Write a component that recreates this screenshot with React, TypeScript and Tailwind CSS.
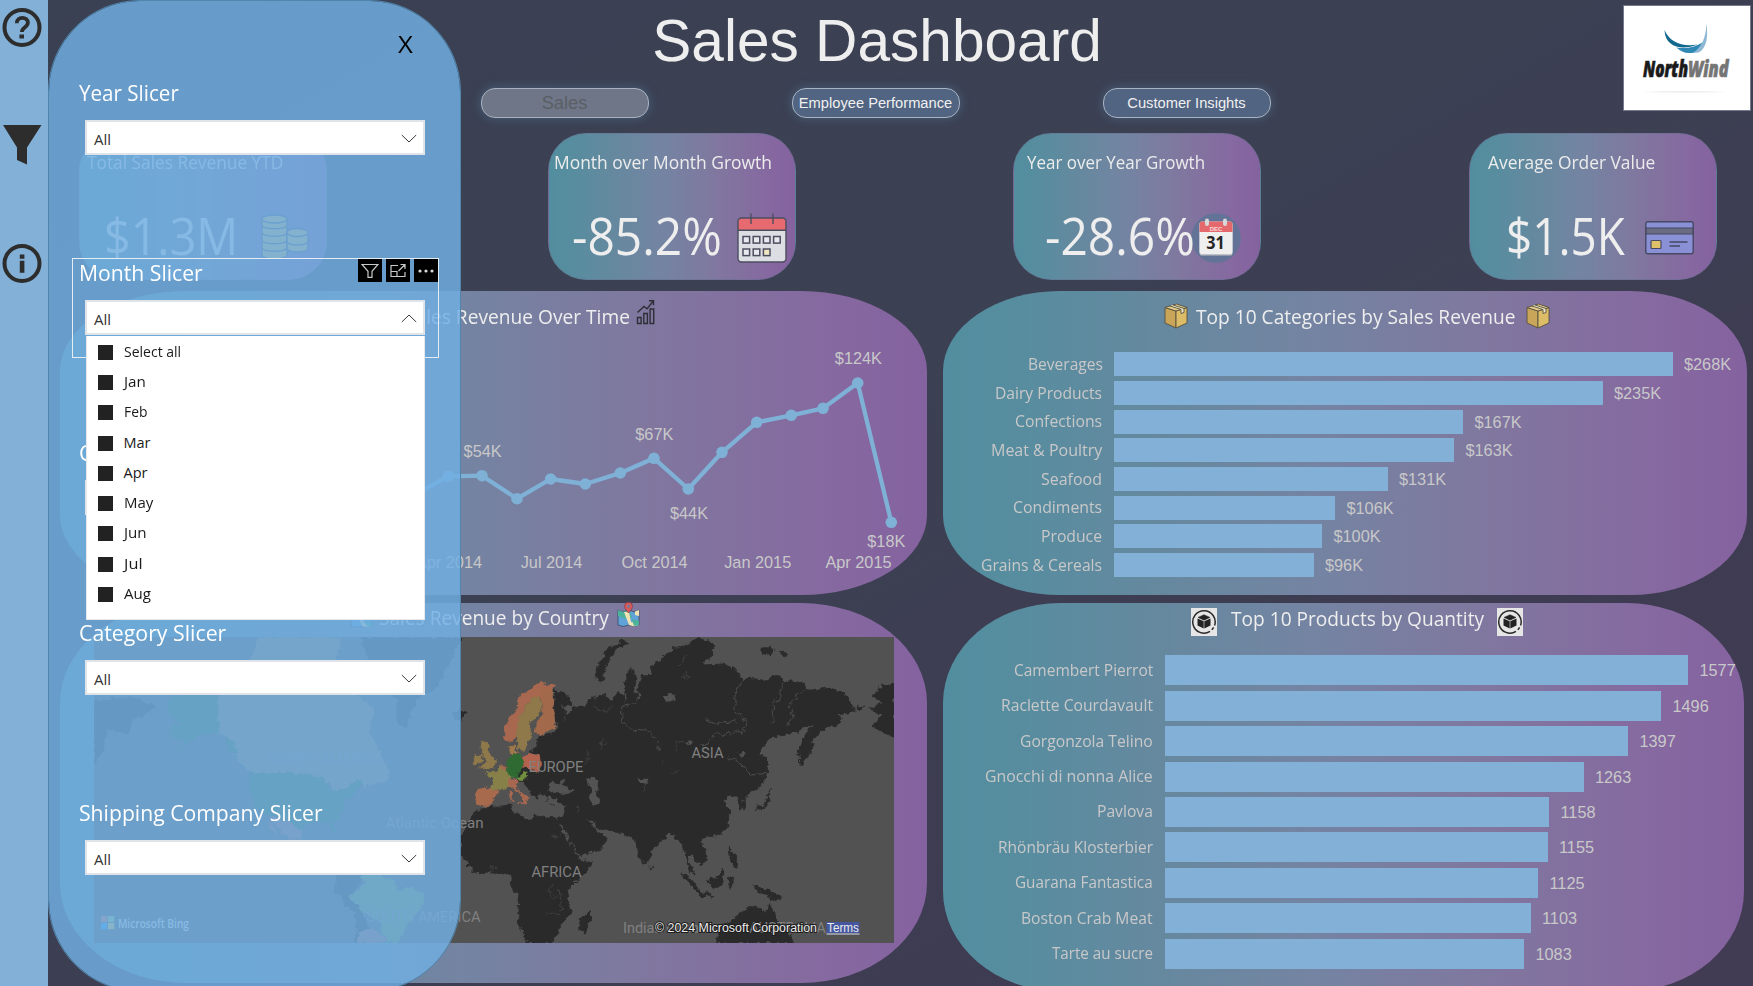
import React, { useLayoutEffect, useRef, useState } from "react";

const GRADIENT =
  "bg-[linear-gradient(90deg,#528e9f_0%,#568d9f_8%,#64899f_25%,#7484a2_46%,#80779f_68%,#8668a0_90%,#84629f_100%)]";

/** Single line of text condensed or stretched to a given width. */
function Fit({ w, className = "", children }: { w: number; className?: string; children: string }) {
  const inner = useRef<HTMLSpanElement>(null);
  const [scale, setScale] = useState(1);
  useLayoutEffect(() => {
    if (inner.current) setScale(w / inner.current.offsetWidth);
  }, [w]);
  return (
    <span className={`block shrink-0 whitespace-nowrap ${className}`} style={{ width: w }}>
      <span ref={inner} className="inline-block origin-left" style={{ transform: `scaleX(${scale})` }}>
        {children}
      </span>
    </span>
  );
}

/* ---------- icons ---------- */

const CoinsIcon = () => (
  <svg width="48" height="48" viewBox="0 0 48 48" fill="#e0c36a" stroke="#4b5a78" strokeWidth="1.3">
    {[38, 30.5, 23, 15.5, 8].map((y) => (
      <path key={y} d={`M1 ${y - 3}v6c0 5 25 5 25 0v-6`} />
    ))}
    <ellipse cx="13.500" cy="5" rx="12.500" ry="4" />
    {[33, 26].map((y) => (
      <path key={y} d={`M26 ${y - 5}v7c3 4 21 4 21 -1v-6`} />
    ))}
    <ellipse cx="36.500" cy="18.500" rx="10.500" ry="4" />
  </svg>
);

const CalendarIcon = () => (
  <svg width="50" height="50" viewBox="0 0 50 50" fill="none">
    <rect x="1" y="5" width="48" height="44" rx="3.500" fill="#dcdee4" />
    <path d="M1 17V8.500a3.500 3.500 0 0 1 3.500-3.500h41a3.500 3.500 0 0 1 3.500 3.500V17z" fill="#e76a70" />
    <rect x="1" y="5" width="48" height="44" rx="3.500" stroke="#4c4e60" strokeWidth="1.400" />
    <path d="M1 17.300h48M14 0.500v10.500M36 0.500v10.500" stroke="#4c4e60" strokeWidth="1.400" />
    <g stroke="#4c4e60" strokeWidth="1.500" fill="#e8e9ee">
      {[6, 16.2, 26.4, 36.6].map((x) => (
        <rect key={x} x={x} y="23.500" width="6.600" height="6.600" />
      ))}
      {[6, 16.2].map((x) => (
        <rect key={x} x={x} y="36" width="6.600" height="6.600" />
      ))}
      <rect x="26.400" y="36" width="6.600" height="6.600" fill="#f0e6bf" />
    </g>
  </svg>
);

const Dec31Icon = () => (
  <svg width="50" height="50" viewBox="0 0 50 50">
    <circle cx="25" cy="25" r="24.800" fill="#637397" />
    <rect x="8.500" y="9" width="33" height="33.500" rx="2.500" fill="#bfc0c4" />
    <rect x="8.500" y="8.500" width="33" height="32.500" rx="2.500" fill="#efefef" />
    <path d="M8.500 19V11a2.500 2.500 0 0 1 2.500-2.500h28a2.500 2.500 0 0 1 2.500 2.500v8z" fill="#e4686c" />
    <rect x="14" y="5.500" width="4" height="7.500" rx="2" fill="#d7d8dc" />
    <rect x="32" y="5.500" width="4" height="7.500" rx="2" fill="#d7d8dc" />
    <text x="25" y="17.500" textAnchor="middle" fontSize="6" fontWeight="700" fill="#f6dcdc" fontFamily="Liberation Sans, sans-serif">
      DEC
    </text>
    <text x="24.500" y="36" textAnchor="middle" fontSize="18" fontWeight="700" fill="#252525" fontFamily="Open Sans, sans-serif" textLength="18.500" lengthAdjust="spacingAndGlyphs">
      31
    </text>
  </svg>
);

const CreditCardIcon = () => (
  <svg width="49" height="34" viewBox="0 0 49 34">
    <rect x="0.800" y="0.800" width="47.400" height="32" rx="2" fill="#8a90d6" stroke="#464864" strokeWidth="1.400" />
    <path d="M1 7h47v6H1z" fill="#6a6c84" stroke="#464864" strokeWidth="1.200" />
    <rect x="6" y="19.500" width="10" height="8" rx="1" fill="#e0c068" stroke="#464864" strokeWidth="1.200" />
    <path d="M24.500 21h18M24.500 25h10.500" stroke="#464864" strokeWidth="1.300" />
  </svg>
);

const TrendIcon = () => (
  <svg width="19" height="26" viewBox="0 0 19 26" fill="none" stroke="#2e2f36" strokeWidth="1.400">
    <path d="M1.500 18.500h3.600v6H1.500zM7.800 14.500h3.600v10H7.800zM14.100 10h3.600v14.500h-3.600z" />
    <path d="M1.500 13.500 8 7.500l3 2.200 6-7.200M13 1.800h4.500v4.500" />
  </svg>
);

const BoxIcon = () => (
  <svg width="24" height="26" viewBox="0 0 24 26" stroke="#55503f" strokeWidth="0.900" strokeLinejoin="round">
    <path d="M1 4.500 12 8v17L1 20z" fill="#c9a55a" />
    <path d="M23 4.500 12 8v17l11-5z" fill="#dcbc66" />
    <path d="M1 4.500 12.500 1 23 4.500 12 8z" fill="#e4cd8a" />
    <path d="M6 3 17 6.500v4l3-1V5.500L9 2" fill="#efe6c8" />
  </svg>
);

const ProductIcon = () => (
  <svg width="26" height="28" viewBox="0 0 26 28" className="shrink-0">
    <path d="M0 0h26v28H0z" fill="#e6e6e6" />
    <path d="M19 23.400A11.200 11.200 0 1 1 23.600 17.500M22.600 19.300l-1.700 2.500" fill="none" stroke="#2a2a2a" strokeWidth="1.500" />
    <path d="m13 6.700 6 2.700L13 12.200 7 9.400z" fill="#222" stroke="#222" strokeWidth="0.500" />
    <path d="M6.500 10.400 12.700 13.200v7.200l-6.200-2.900zM19.500 10.400 13.300 13.200v7.200l6.200-2.900z" fill="#222" />
  </svg>
);

const MapPinIcon = () => (
  <svg width="23" height="26" viewBox="0 0 23 26" strokeLinejoin="round">
    <path d="m1 8 5 2 6-2 5 2 5-2v15l-5 1.500-5-1.500-6 1.500L1 23z" fill="#5fa3d8" stroke="#3b4d63" strokeWidth="0.800" />
    <path d="m1 8 5 2 6-2 3 8-6 1-8-3z" fill="#4bb39a" />
    <path d="M7 10h5l2 10 8 2v1l-5 1.500L12 23z" fill="#efe3b5" />
    <path d="m15 17 7 2v4l-5 1z" fill="#4bb39a" />
    <path d="M18 9.500 22 8v6l-4-1z" fill="#efe3b5" />
    <path d="M11.500 11S7.500 7 7.500 4.300a4 4 0 0 1 8 0C15.500 7 11.500 11 11.500 11z" fill="#d8595b" stroke="#7a3a44" strokeWidth="0.700" />
    <circle cx="11.500" cy="4.300" r="1.500" fill="#6e7f9c" />
  </svg>
);

const Chevron = ({ up }: { up?: boolean }) => (
  <svg width="16" height="9" viewBox="0 0 16 9" fill="none" stroke="#3c3c3c" strokeWidth="1" className="mt-px">
    {up ? <path d="m0.800 8 7.200-7 7.200 7" /> : <path d="m0.800 1 7.200 7 7.200-7" />}
  </svg>
);

/* ---------- sidebar ---------- */

function Sidebar() {
  return (
    <aside className="flex h-full w-[48px] shrink-0 flex-col bg-[#82b0d6] pl-[2px] pt-[7px]">
      <svg width="40" height="40" viewBox="0 0 40 40" fill="none" stroke="#2d2d2d">
        <circle cx="20" cy="20.500" r="17.500" strokeWidth="4" />
        <path d="M14.700 16.200c0-7 11.200-7 11.200-.4 0 4.500-6 4.400-6 9.200" strokeWidth="3.800" />
        <path d="M17.400 27.500h4.600v4h-4.600z" fill="#2d2d2d" stroke="none" />
      </svg>
      <svg width="40" height="40" viewBox="0 0 40 40" className="mt-[78px]">
        <path d="M1 0h38.500L25 22.500V39.500L15 35V22.500z" fill="#2d2d2d" />
      </svg>
      <svg width="40" height="40" viewBox="0 0 40 40" className="mt-[78px]" fill="none">
        <circle cx="20" cy="20.500" r="17.500" stroke="#2d2d2d" strokeWidth="4" />
        <path d="M17.800 11.500h4.600v4.200h-4.600zM17.800 17.800h4.600v12h-4.600z" fill="#2d2d2d" />
      </svg>
    </aside>
  );
}

/* ---------- header ---------- */

function NorthWindLogo() {
  return (
    <svg width="128" height="106" viewBox="0 0 128 106">
      <path d="M0.500 0.500h127v105H0.500z" fill="#fff" stroke="#777a8c" />
      <path d="M41.500 25c5 12 17 17 33 14.500C60 45.500 42 43 41.500 25z" fill="#12678f" />
      <path d="M53.500 42.500c8 1.500 18 .5 26.500-5.500-4 8-7 10-9.500 10.800-8 1-13-1-17-5.300z" fill="#2f87b3" />
      <path d="M83.500 18c1.500 14 .5 24-7 29-2 .8-4 .8-6.500.8 8-5 13-14 13.500-29.800z" fill="#8fb8d6" />
      <text y="71.500" fontSize="22" fontWeight="800" fontStyle="italic" fontFamily="Open Sans, Roboto, sans-serif" strokeWidth="0.700">
        <tspan x="20" textLength="45" lengthAdjust="spacingAndGlyphs" fill="#1a1a1a" stroke="#1a1a1a">North</tspan>
        <tspan x="65" textLength="40.500" lengthAdjust="spacingAndGlyphs" fill="#757575" stroke="#757575">Wind</tspan>
      </text>
      <path d="M18 87q44-2 88 0-44 1.600-88 0z" fill="#eeeeee" />
    </svg>
  );
}

function Header() {
  const pill =
    "flex h-[30px] w-[168px] items-center justify-center rounded-[14px] border border-[#a9b2c0] shadow-[0_0_10px_1px_rgba(90,140,180,0.35)]";
  return (
    <header className="flex h-[133px] font-['Liberation_Sans',Arial,sans-serif]">
      <div className="w-[1575px]">
        <h1 className="mt-[8px] pl-[83px] text-center text-[58.600px] leading-[66px] text-[#eeeeee]">Sales Dashboard</h1>
        <nav className="mt-[14px] flex gap-[143px] pl-[432.500px]">
          <button className={`${pill} bg-[#6e7687] text-[18.300px] text-[#5a5f66]`}>Sales</button>
          <button className={`${pill} bg-[#516482] text-[14.700px] text-[#f0f0f0]`}>
            <span className="whitespace-nowrap">Employee Performance</span>
          </button>
          <button className={`${pill} bg-[#516482] text-[14.700px] text-[#f0f0f0]`}>Customer Insights</button>
        </nav>
      </div>
      <div className="mt-[5px]">
        <NorthWindLogo />
      </div>
    </header>
  );
}

/* ---------- KPI cards ---------- */

interface KpiProps {
  title: string;
  titleW: number;
  titlePad: string;
  value: string;
  valueW: number;
  valuePad: string;
  iconGap: string;
  icon: React.ReactNode;
}

function Kpi({ title, titleW, titlePad, value, valueW, valuePad, iconGap, icon }: KpiProps) {
  return (
    <section className={`h-[147px] w-[248px] rounded-[38px] border border-[#66708f]/50 pt-[14px] ${GRADIENT}`}>
      <div className={titlePad}>
        <Fit w={titleW} className="text-[18px] leading-[28px] text-[#ececec]">{title}</Fit>
      </div>
      <div className={`mt-[29px] flex h-[62px] items-center ${valuePad}`}>
        <Fit w={valueW} className="text-[50.500px] leading-[60px] text-[#eeeeee]">{value}</Fit>
        <span className={`shrink-0 pt-[3px] ${iconGap}`}>{icon}</span>
      </div>
    </section>
  );
}

/* ---------- revenue over time ---------- */

const points: [number, number][] = [
  [139, 540], [171, 520], [205, 530], [238, 500], [273, 512], [306, 498], [341, 520], [376, 505], [410, 497],
  [448.3, 476.3], [482, 475.7], [517, 498.7], [550.7, 479], [585.3, 484], [620.3, 473], [654, 458.3], [688.3, 489],
  [722, 452.3], [756.7, 422.3], [791.3, 415.3], [823, 408.3], [857.7, 383], [891.3, 522.3],
];
const pointLabels: [number, number, string][] = [
  [858.4, 364, "$124K"], [654.3, 440, "$67K"], [482.600, 457, "$54K"], [689, 519, "$44K"], [886.3, 547, "$18K"],
];
const monthLabels: [number, string][] = [
  [449, "Apr 2014"], [551.5, "Jul 2014"], [654.6, "Oct 2014"], [757.700, "Jan 2015"], [858.5, "Apr 2015"],
];

function RevenueOverTime() {
  return (
    <section className={`h-[304px] w-[867px] rounded-[126px/80px] ${GRADIENT}`}>
      <div className="flex h-[50px] items-center pl-[345px]">
        <Fit w={225} className="mt-[2px] text-[19.500px] leading-[30px] text-[#eeeeee]">Sales Revenue Over Time</Fit>
        <span className="-mt-[8px] ml-[5.500px]"><TrendIcon /></span>
      </div>
      <svg width="867" height="250" viewBox="60 341 867 250" fontFamily="Liberation Sans, Arial, sans-serif" fontSize="16.300" fill="#c8c8c9" textAnchor="middle">
        <polyline points={points.map((p) => p.join(",")).join(" ")} fill="none" stroke="#7fb0d6" strokeWidth="4.300" strokeLinejoin="round" />
        {points.map(([x, y]) => (
          <circle key={x} cx={x} cy={y} r="5.800" fill="#7fb0d6" />
        ))}
        {pointLabels.map(([x, y, t]) => (
          <text key={t} x={x} y={y}>{t}</text>
        ))}
        {monthLabels.map(([x, t]) => (
          <text key={t} x={x} y="567.700">{t}</text>
        ))}
      </svg>
    </section>
  );
}

/* ---------- bar charts ---------- */

type Bar = [name: string, nameW: number, barW: number, value: string];

const categories: Bar[] = [
  ["Beverages", 74.500, 559, "$268K"],
  ["Dairy Products", 107, 489, "$235K"],
  ["Confections", 87, 349.500, "$167K"],
  ["Meat & Poultry", 111.500, 340.500, "$163K"],
  ["Seafood", 61, 274, "$131K"],
  ["Condiments", 89, 221.500, "$106K"],
  ["Produce", 61, 208.500, "$100K"],
  ["Grains & Cereals", 121.500, 200, "$96K"],
];

const products: Bar[] = [
  ["Camembert Pierrot", 139, 523.500, "1577"],
  ["Raclette Courdavault", 152, 496.500, "1496"],
  ["Gorgonzola Telino", 133, 463.500, "1397"],
  ["Gnocchi di nonna Alice", 168, 419, "1263"],
  ["Pavlova", 56, 384.500, "1158"],
  ["Rhönbräu Klosterbier", 155, 383, "1155"],
  ["Guarana Fantastica", 138, 373.500, "1125"],
  ["Boston Crab Meat", 132, 366, "1103"],
  ["Tarte au sucre", 101, 359.500, "1083"],
];

function BarRows({ rows, row, label, bar }: { rows: Bar[]; row: string; label: string; bar: string }) {
  return (
    <div>
      {rows.map(([name, nameW, barW, value]) => (
        <div key={name} className={`flex items-center ${row}`}>
          <div className={`flex shrink-0 justify-end ${label}`}>
            <Fit w={nameW} className="-mt-px text-[16.500px] leading-[24px] text-[#c8c8c9]">{name}</Fit>
          </div>
          <div className={`ml-[11.500px] shrink-0 bg-[#82b0d6] ${bar}`} style={{ width: barW }} />
          <span className="ml-[11.500px] font-['Liberation_Sans',Arial,sans-serif] text-[16.300px] leading-[24px] text-[#c8c8c9]">{value}</span>
        </div>
      ))}
    </div>
  );
}

function TopCategories() {
  return (
    <section className={`h-[304px] w-[804px] rounded-[117px/80px] ${GRADIENT}`}>
      <div className="flex h-[50px] items-center pl-[221px]">
        <span className="-mt-px"><BoxIcon /></span>
        <Fit w={319} className="ml-[8px] mt-[2px] text-[19.500px] leading-[30px] text-[#eeeeee]">Top 10 Categories by Sales Revenue</Fit>
        <span className="-mt-px ml-[11px]"><BoxIcon /></span>
      </div>
      <div className="pt-[9px]">
        <BarRows rows={categories} row="h-[28.700px]" label="w-[159px]" bar="h-[24px]" />
      </div>
    </section>
  );
}

function TopProducts() {
  return (
    <section className={`h-[388px] w-[801px] rounded-[117px/100px] ${GRADIENT}`}>
      <div className="flex h-[37px] items-center pl-[248px]">
        <ProductIcon />
        <Fit w={253} className="-mt-[6px] ml-[14px] text-[19.500px] leading-[30px] text-[#eeeeee]">Top 10 Products by Quantity</Fit>
        <span className="ml-[13px]"><ProductIcon /></span>
      </div>
      <div className="pt-[12.500px]">
        <BarRows rows={products} row="h-[35.450px]" label="w-[210px]" bar="h-[30px]" />
      </div>
    </section>
  );
}

/* ---------- map ---------- */

const OLD_WORLD_LAND = [
  "M345 300 370 310 398 335 390 352 362 342 380 375 400 355 430 348 455 325 475 318 498 310 496 328 515 330 535 303 552 322 562 345 556 300 558 255 575 235 586 262 580 300 592 318 588 345 600 320 595 290 604 258 634 250 640 226 668 206 690 180 742 165 768 145 800 152 822 165 820 195 795 215 788 225 850 222 888 240 905 275 932 265 980 272 1010 255 1038 275 1095 280 1100 300 1165 295 1215 310 1240 345 1245 365 1190 375 1210 395 1180 410 1145 420 1120 450 1110 490 1080 525 1075 480 1095 440 1122 402 1060 430 1000 440 985 450 955 490 985 505 985 550 960 590 930 610 912 628 915 655 900 655 896 622 875 615 850 630 870 660 868 700 840 735 800 740 780 752 800 790 795 815 775 820 752 792 742 812 765 855 748 845 735 790 720 750 690 728 670 745 640 772 632 800 615 828 595 790 585 745 560 738 520 722 475 717 450 685 440 690 465 715 470 728 505 745 482 775 420 800 400 770 370 710 348 690 370 680 376 652 345 648 318 632 322 618 300 612 290 628 268 600 240 572 235 545 250 528 302 545 298 492 275 490 290 465 300 440 345 430 350 400 340 340Z",
  "M64 745 80 700 108 662 150 650 215 645 222 668 275 692 285 678 350 688 375 740 400 780 420 810 457 812 442 842 388 892 385 930 395 970 365 1000 345 1042 335 1058 262 1058 235 990 240 930 215 890 217 855 170 845 108 848 75 812 64 795Z",
  "M450 960 455 980 435 1025 418 1020 425 985Z",
  "M550 150 562 158 520 185 500 220 484 276 468 268 474 230 500 178Z",
  "M1362 280 1330 285 1298 318 1330 340 1292 355 1310 370 1330 375 1298 408 1330 430 1362 445Z",
  "M722 848 745 858 785 905 822 918 785 920 760 895Z",
  "M803 875 830 860 850 838 852 880 825 897Z",
  "M938 885 985 900 1025 925 1000 928 960 908Z",
  "M830 1058 835 1012 870 995 905 965 935 950 960 952 975 972 990 940 1008 988 1040 1020 1060 1058Z",
  "M1000 590 985 605 990 635 960 658 945 655 980 635 984 605Z",
  "M868 765 878 790 895 830 885 835 870 800Z",
  "M38 370 60 360 76 368 62 390 45 388Z",
  "M965 175 990 172 1005 185 985 195 968 190ZM1018 185 1040 190 1030 198Z",
  "M1250 345 1268 348 1262 365 1248 360Z",
  "M870 860 878 862 874 895 866 880Z",
  "M630 825 638 832 632 840Z",
];

const EUROPE: [string, string][] = [
  ["#a86850", "M193 410 235 350 242 320 275 295 300 280 345 285 335 305 300 318 275 318 248 360 235 400 232 440 205 458 193 440Z"],
  ["#8f784a", "M235 400 248 362 275 320 297 318 306 358 290 380 270 400 272 440 250 482 232 472Z"],
  ["#a26a4c", "M297 305 335 300 345 405 310 435 287 430 288 398 312 370Z"],
  ["#8f784a", "M122 455 145 458 150 488 170 515 165 530 118 538 136 515 130 490 120 472ZM103 500 125 488 126 515 103 525Z"],
  ["#a07848", "M208 470 222 468 235 490 212 494Z"],
  ["#2f6b30", "M204 502 222 494 247 500 250 530 234 542 240 560 208 562 197 535Z"],
  ["#b2634d", "M247 502 270 494 298 497 302 530 290 545 252 528Z"],
  ["#a86850", "M178 530 198 530 196 545Z"],
  ["#878048", "M135 550 155 550 180 532 210 556 205 590 185 602 155 597 158 568Z"],
  ["#a86a4e", "M107 597 150 595 178 605 158 628 150 645 128 650 108 642Z"],
  ["#a86850", "M202 568 240 572 228 585 240 605 268 622 258 642 235 640 255 630 222 595 203 588ZM210 605 218 605 216 630 209 625Z"],
  ["#729040", "M234 562 256 548 261 562 245 572Z"],
];

const AMERICAS: [string, string][] = [
  ["#2c2c2c", "M282 300 400 290 470 320 440 345 400 360 380 400 320 390 312 450 282 492Z"],
  ["#2c2c2c", "M1080 112H1385L1350 190 1310 262 1250 300 1228 350 1215 385 1190 370 1190 300 1140 240 1100 170Z"],
  ["#8a7858", "M655 285 655 400 680 410 718 462 700 465 755 520 920 520 990 550 1000 575 1040 560 1080 540 1095 562 1165 540 1170 520 1150 480 1110 400 1120 325 1080 290 1010 180 1022 112 780 112 750 182 740 270Z"],
  ["#2a6432", "M655 280 655 402 600 400 570 425 500 465 558 425 515 412 505 388 540 370 500 332 515 285ZM675 410 695 420 718 462 700 458 680 432Z"],
  ["#2a6432", "M750 520 920 518 970 535 997 575 1040 565 1078 535 1085 560 1040 600 1025 640 1000 665 1012 715 985 670 930 668 905 692 870 665 800 650 762 610 748 560Z"],
  ["#9a6058", "M800 650 870 665 905 692 908 718H870L840 690ZM800 650 840 712 815 690Z"],
  ["#2c2c2c", "M1010 822 1100 822 1050 890 1090 940 1110 985 1072 1028H1064L1070 950 1030 908 1005 870Z"],
  ["#688c44", "M1048 890 1095 850 1085 822 1130 822 1188 842 1190 870 1240 865 1277 885 1268 915 1235 960 1192 1028H1155L1165 1015 1142 995 1145 965 1080 930Z"],
  ["#9a6058", "M1080 1000 1105 980 1140 1000 1160 1015 1150 1028H1070Z"],
];

function WorldMap() {
  const label = { fill: "#808080", lengthAdjust: "spacingAndGlyphs" };
  return (
    <svg width="800" height="306" viewBox="0 0 800 306" fontFamily="Roboto, sans-serif" fontSize="15">
      <defs>
        <filter id="coast" x="0" y="0" width="800" height="306" filterUnits="userSpaceOnUse" primitiveUnits="userSpaceOnUse">
          <feTurbulence type="fractalNoise" baseFrequency="0.180" numOctaves="3" seed="4" />
          <feDisplacementMap in="SourceGraphic" scale="7.500" xChannelSelector="R" yChannelSelector="G" />
        </filter>
      </defs>
      <path d="M0 0h800v306H0z" fill="#525252" />
      <g filter="url(#coast)">
        <g transform="translate(-94 -37) scale(.33333)">
          {AMERICAS.map(([fill, d]) => (
            <path key={d} d={d} fill={fill} />
          ))}
        </g>
        <g transform="translate(346 -47) scale(.33333)">
          {OLD_WORLD_LAND.map((d) => (
            <path key={d} d={d} fill="#2c2c2c" stroke="#2c2c2c" strokeWidth="3" strokeLinejoin="round" />
          ))}
          <g fill="#525252">
            <path d="M325 600 335 575 355 580 372 565 368 582 402 605 370 612 340 608Z" />
            <path d="M440 570 465 562 475 580 468 600 480 640 460 648 448 620 452 600Z" />
            <path d="M318 632 325 615 360 640 376 650 360 655Z" />
            <path d="M665 318 690 312 705 325 690 335 672 330ZM592 568 625 566 618 585 600 578ZM735 452 762 455 750 466ZM895 486 920 490 905 500Z" />
          </g>
          <g fill="none" stroke="#4c4c4c" strokeWidth="3" strokeLinejoin="round">
            <path d="M588 340 545 350 545 395 575 418 620 420 655 455 658 480" />
            <path d="M905 275 885 310 885 360 920 400 915 420 850 435 830 428 800 460 780 468" />
            <path d="M800 390 830 402 890 392" />
            <path d="M1030 275 1020 320 1000 340 1000 400M1090 300 1045 345 1060 370 1040 410" />
            <path d="M865 505 890 510 930 555 980 550" />
          </g>
          <g fill="none" stroke="#484848" strokeWidth="2">
            <path d="M725 258 755 262M742 245V270M740 195 715 225" />
            <path d="M705 455H735M708 455V480M475 460H500M488 445V475M440 485 450 500 430 520M425 545 440 560" />
            <path d="M610 605 618 590M690 545H712M665 508V525M413 650V670" />
            <path d="M468 320 470 360 500 365 515 350M390 365 365 400" />
            <path d="M335 880 330 910 345 925M358 900 365 960M320 970H360M340 740 365 735M148 835H168M155 825V843" />
          </g>
          {EUROPE.map(([fill, d]) => (
            <path key={d} d={d} fill={fill} stroke={fill} strokeWidth="2" strokeLinejoin="round" />
          ))}
          <path d="M236 538 255 535 262 545 240 550Z" fill="#2c2c2c" />
        </g>
      </g>
      <text x="175.500" y="127" textLength="114" {...label}>NORTH AMERICA</text>
      <text x="291.500" y="190.500" textLength="98" {...label}>Atlantic Ocean</text>
      <text x="272.500" y="284.500" textLength="114" {...label}>SOUTH AMERICA</text>
      <text x="434.500" y="134.500" textLength="55" {...label}>EUROPE</text>
      <text x="597.500" y="121" textLength="32" {...label}>ASIA</text>
      <text x="437.500" y="239.500" textLength="50" {...label}>AFRICA</text>
      <text x="529" y="296" textLength="84" {...label}>Indian Ocean</text>
      <text x="655" y="296" textLength="77" {...label}>AUSTRALIA</text>
      <path d="M7 279h6.300v6.300H7z" fill="#e87060" />
      <path d="M14 279h6.300v6.300H14z" fill="#8fd070" />
      <path d="M7 286h6.300v6.300H7z" fill="#20a8f8" />
      <path d="M14 286h6.300v6.300H14z" fill="#f0cc50" />
      <text x="24" y="290.500" textLength="71" lengthAdjust="spacingAndGlyphs" fontFamily="Open Sans, sans-serif" fontSize="12.500" fontWeight="600" fill="#f0f0f0">
        Microsoft Bing
      </text>
      <g fontFamily="Liberation Sans, Arial, sans-serif" fontSize="12" fill="#ececec">
        <text x="561" y="294.500" textLength="162" stroke="#1c1c1c" strokeWidth="2" paintOrder="stroke" lengthAdjust="spacingAndGlyphs">© 2024 Microsoft Corporation</text>
        <path d="M732.500 285h33v11h-33z" fill="#4457a0" />
        <text x="733" y="294.500" textLength="32" lengthAdjust="spacingAndGlyphs">Terms</text>
        <path d="M732.500 297h33" stroke="#d8dcf0" strokeWidth="1.200" />
      </g>
    </svg>
  );
}

function RevenueByCountry() {
  return (
    <section className={`h-[380px] w-[867px] rounded-[126px/100px] ${GRADIENT}`}>
      <div className="flex h-[34px] items-start pl-[290px]">
        <MapPinIcon />
        <Fit w={230} className="ml-[6px] text-[19.500px] leading-[30px] text-[#eeeeee]">Sales Revenue by Country</Fit>
        <span className="-mt-[1px] ml-[8px]"><MapPinIcon /></span>
      </div>
      <div className="pl-[34px]"><WorldMap /></div>
    </section>
  );
}

/* ---------- slicer drawer ---------- */

const months: [string, number][] = [
  ["Select all", 57], ["Jan", 22], ["Feb", 24], ["Mar", 27], ["Apr", 24], ["May", 29], ["Jun", 23], ["Jul", 18], ["Aug", 27],
];

function VisualHeader() {
  const button = "flex h-[23px] w-[24px] items-center justify-center bg-black";
  return (
    <div className="absolute -top-px right-0 flex gap-[4px] pt-px">
      <span className={button}>
        <svg width="18" height="16" viewBox="0 0 18 16" fill="none" stroke="#c9c9c9" strokeWidth="1.200">
          <path d="M1 1.500h16l-6 6.800v6H7v-6z" />
        </svg>
      </span>
      <span className={button}>
        <svg width="16" height="15" viewBox="0 0 16 15" fill="none" stroke="#c9c9c9" strokeWidth="1.200">
          <path d="M8 2.500H1v11h14V9M1 8.500h6v5M8.500 8 14.500 2M10.500 1.500H15V6" />
        </svg>
      </span>
      <span className={button}>
        <svg width="18" height="4" viewBox="0 0 18 4" fill="#d8d8d8">
          <circle cx="3" cy="2" r="1.600" />
          <circle cx="9" cy="2" r="1.600" />
          <circle cx="15" cy="2" r="1.600" />
        </svg>
      </span>
    </div>
  );
}

function MonthMenu() {
  return (
    <ul className="absolute left-[13px] top-[77px] z-10 h-[284px] w-[339px] border-x border-b border-[#e6e8ec] bg-white pt-px">
      {months.map(([m, w]) => (
        <li key={m} className="flex h-[30.300px] items-center pl-[11px]">
          <span className="size-[15px] shrink-0 bg-[#222222]" />
          <Fit w={w} className="-mt-px ml-[10.500px] text-[14.500px] leading-[20px] text-[#1a1a1a]">{m}</Fit>
        </li>
      ))}
    </ul>
  );
}

function Slicer({ title, w, open }: { title: string; w: number; open?: boolean }) {
  return (
    <div className={`relative h-[100px] w-[367px] border ${open ? "z-10 border-[#e4ecf4]" : "border-transparent"}`}>
      <div className="pl-[5.500px]">
        <Fit w={w} className="-mt-px text-[21px] leading-[30px] text-white">{title}</Fit>
      </div>
      <div className="ml-[12px] mt-[12px] flex h-[35px] w-[340px] items-center justify-between border-2 border-[#dfe4ea] bg-white pl-[7px] pr-[6px]">
        <Fit w={17} className="mt-[3px] text-[15px] leading-[20px] text-[#333333]">All</Fit>
        <Chevron up={open} />
      </div>
      {open && <VisualHeader />}
      {open && <MonthMenu />}
    </div>
  );
}

function SlicerDrawer() {
  return (
    <div className="absolute left-[48px] top-0 h-[992px] w-[412.500px] rounded-[92px] border-[1.500px] border-[#5086ae] bg-[rgba(113,175,226,0.83)] bg-clip-padding pl-[23px] pt-[27px]">
      <button className="ml-[325px] block h-[32px]">
        <Fit w={15} className="text-[24px] leading-[32px] text-black">X</Fit>
      </button>
      <div className="mt-[18px] flex flex-col gap-[80px]">
        <Slicer title="Year Slicer" w={100} />
        <Slicer title="Month Slicer" w={124} open />
        <Slicer title="Country Slicer" w={138} />
        <Slicer title="Category Slicer" w={147} />
        <Slicer title="Shipping Company Slicer" w={244} />
      </div>
    </div>
  );
}

export default function App() {
  return (
    <div className="relative flex h-[986px] w-[1753px] overflow-hidden bg-[linear-gradient(150deg,#3a4153_0%,#3c4053_45%,#3e3c52_75%,#423b54_100%)] font-['Open_Sans','Noto_Sans',sans-serif]">
      <Sidebar />
      <main className="w-[1705px] shrink-0">
        <Header />
        <div className="flex pl-[31px]">
          <Kpi title="Total Sales Revenue YTD" titleW={196} titlePad="pl-[7px]" value="$1.3M" valueW={134} valuePad="pl-[24px]" iconGap="ml-[23px]" icon={<CoinsIcon />} />
          <div className="w-[221px]" />
          <Kpi title="Month over Month Growth" titleW={218} titlePad="pl-[5px]" value="-85.2%" valueW={150} valuePad="pl-[23px]" iconGap="ml-[15px]" icon={<CalendarIcon />} />
          <div className="w-[217px]" />
          <Kpi title="Year over Year Growth" titleW={178} titlePad="pl-[13px]" value="-28.6%" valueW={150} valuePad="pl-[31px]" iconGap="-ml-[4px]" icon={<Dec31Icon />} />
          <div className="w-[208px]" />
          <Kpi title="Average Order Value" titleW={167} titlePad="pl-[18px]" value="$1.5K" valueW={119} valuePad="pl-[36px]" iconGap="ml-[20px]" icon={<CreditCardIcon />} />
        </div>
        <div className="flex gap-[16px] pl-[12px] pt-[11px]">
          <div className="flex flex-col gap-[8px]">
            <RevenueOverTime />
            <RevenueByCountry />
          </div>
          <div className="flex flex-col gap-[8px]">
            <TopCategories />
            <TopProducts />
          </div>
        </div>
      </main>
      <SlicerDrawer />
    </div>
  );
}
